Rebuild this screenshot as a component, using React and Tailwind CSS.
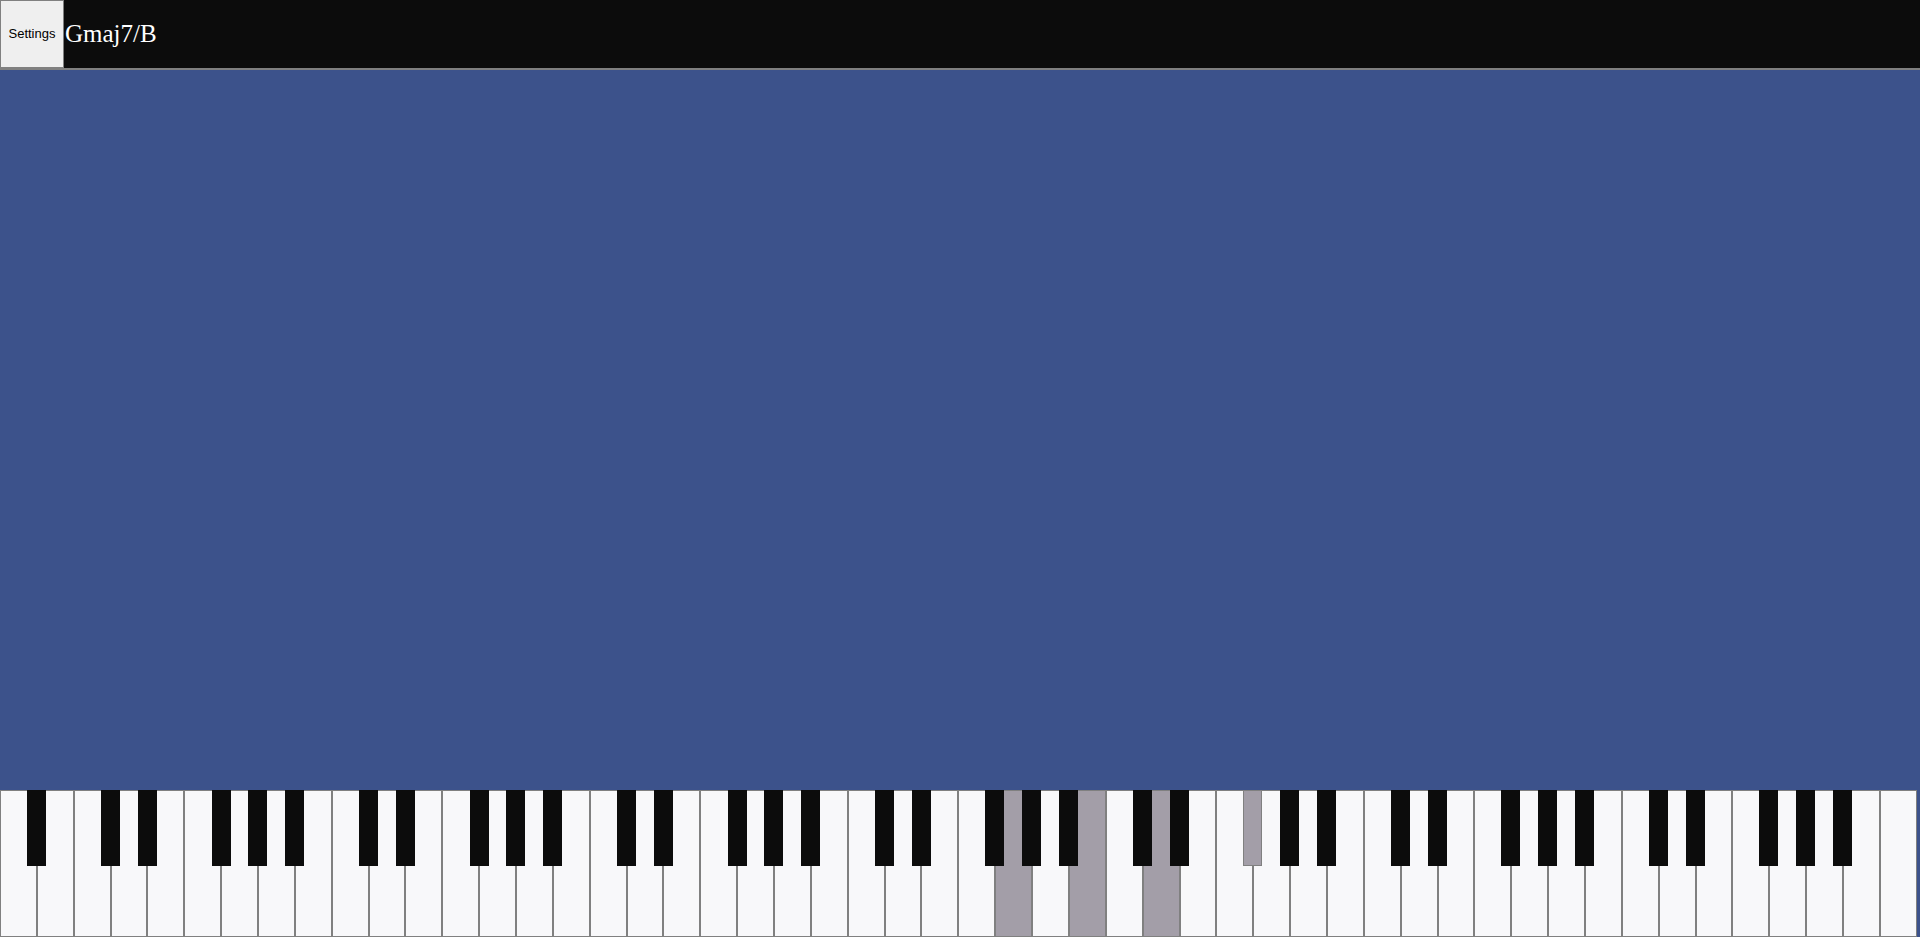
import React from 'react'

// 88 keys: A0..C8, 52 white keys
const WHITE_COUNT = 52
const NOTE_NAMES = ['C', 'D', 'E', 'F', 'G', 'A', 'B']
const HAS_SHARP = { C: true, D: true, F: true, G: true, A: true }
const ACTIVE_WHITE = [27, 29, 31] // G4 B4 D5
const ACTIVE_BLACK = [33] // F#5
const KEY_W = 36.85

function buildKeys() {
  const whites = []
  const blacks = []
  for (let i = 0; i < WHITE_COUNT; i++) {
    const name = NOTE_NAMES[(i + 5) % 7]
    whites.push({ i, name, active: ACTIVE_WHITE.includes(i) })
    if (HAS_SHARP[name] && i < WHITE_COUNT - 1) {
      blacks.push({ i, left: (i + 1) * KEY_W - 9.5, active: ACTIVE_BLACK.includes(i) })
    }
  }
  return { whites, blacks }
}

function Keyboard() {
  const { whites, blacks } = buildKeys()
  return (
    <div className="relative flex h-[147px] w-[1917px] shrink-0">
      {whites.map((k) => (
        <div
          key={k.i}
          className={`flex-1 border border-[#808080] ${k.active ? 'bg-[#a39ea8]' : 'bg-[#f8f8fa]'}`}
        />
      ))}
      {blacks.map((k) => (
        <div
          key={k.i}
          style={{ left: k.left }}
          className={`absolute top-0 h-[76px] w-[19px] ${k.active ? 'bg-[#a39ea8] border border-[#808080]' : 'bg-[#0c0c0c]'}`}
        />
      ))}
    </div>
  )
}

export default function App() {
  return (
    <div className="flex h-[937px] flex-col bg-[#3c528b] overflow-hidden">
      <header className="flex h-[70px] shrink-0 items-center bg-[#0c0c0c] border-b-2 border-[#808080]">
        <button className="h-full w-[64px] bg-[#efefef] border border-[#808080] text-[13px] text-black font-['Liberation_Sans',Arial,sans-serif]">
          Settings
        </button>
        <span className="pl-px text-[25px] text-white font-['Liberation_Serif','Times_New_Roman',serif]">
          Gmaj7/B
        </span>
      </header>
      <main className="flex-1" />
      <Keyboard />
    </div>
  )
}
